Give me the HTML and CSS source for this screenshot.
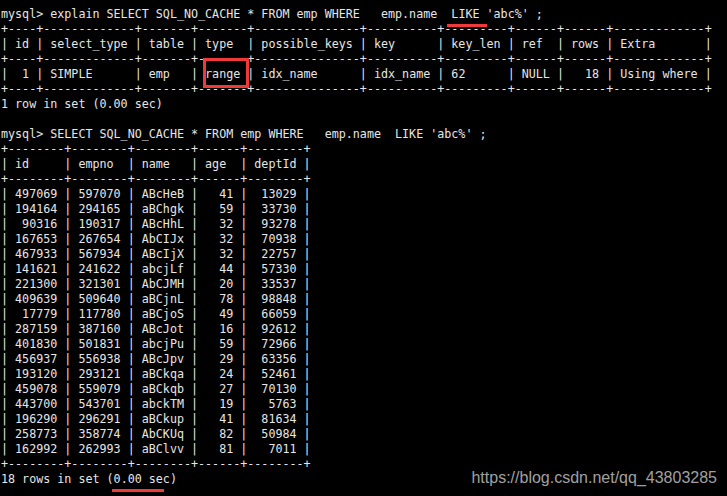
FILE: index.html
```html
<!DOCTYPE html>
<html lang="en">
<head>
    <meta charset="UTF-8">
    <meta name="viewport" content="width=device-width, initial-scale=1.0">
    <title>mysql explain</title>
    <link rel="stylesheet" href="styles.css">
</head>
<body>
    <div class="terminal">
<pre class="console">mysql&gt; explain SELECT SQL_NO_CACHE * FROM emp WHERE   emp.name  <span class="mark-line like">LIKE</span> 'abc%' ;
+----+-------------+-------+-------+---------------+----------+---------+------+------+-------------+
| id | select_type | table | type  | possible_keys | key      | key_len | ref  | rows | Extra       |
+----+-------------+-------+-------+---------------+----------+---------+------+------+-------------+
|  1 | SIMPLE      | emp   | <span class="mark-box">range</span> | idx_name      | idx_name | 62      | NULL |   18 | Using where |
+----+-------------+-------+-------+---------------+----------+---------+------+------+-------------+
1 row in set (0.00 sec)

mysql&gt; SELECT SQL_NO_CACHE * FROM emp WHERE   emp.name  LIKE 'abc%' ;
+--------+--------+--------+------+--------+
| id     | empno  | name   | age  | deptId |
+--------+--------+--------+------+--------+
| 497069 | 597070 | ABcHeB |   41 |  13029 |
| 194164 | 294165 | aBChgk |   59 |  33730 |
|  90316 | 190317 | ABcHhL |   32 |  93278 |
| 167653 | 267654 | AbCIJx |   32 |  70938 |
| 467933 | 567934 | ABcIjX |   32 |  22757 |
| 141621 | 241622 | abcjLf |   44 |  57330 |
| 221300 | 321301 | AbCJMH |   20 |  33537 |
| 409639 | 509640 | aBCjnL |   78 |  98848 |
|  17779 | 117780 | aBCjoS |   49 |  66059 |
| 287159 | 387160 | ABcJot |   16 |  92612 |
| 401830 | 501831 | abcjPu |   59 |  72966 |
| 456937 | 556938 | ABcJpv |   29 |  63356 |
| 193120 | 293121 | aBCkqa |   24 |  52461 |
| 459078 | 559079 | aBCkqb |   27 |  70130 |
| 443700 | 543701 | abckTM |   19 |   5763 |
| 196290 | 296291 | aBCkup |   41 |  81634 |
| 258773 | 358774 | AbCKUq |   82 |  50984 |
| 162992 | 262993 | aBClvv |   81 |   7011 |
+--------+--------+--------+------+--------+
18 rows in set (<span class="mark-line sec">0.00 sec</span>)</pre>
        <div class="watermark">https://blog.csdn.net/qq_43803285</div>
    </div>
</body>
</html>
```

FILE: styles.css
```css
html,
body {
    margin: 0;
    background-color: #000;
}

body {
    overflow: hidden;
}

.terminal {
    position: relative;
    height: 496px;
    background-color: #000;
}

.console {
    margin: 0;
    padding: 7px 0 0 1px;
    font-family: "DejaVu Sans Mono", "Liberation Mono", monospace;
    font-size: 11.7px;
    line-height: 15px;
    color: #e6e6e6;
}

/* red annotations drawn over the terminal text */
.mark-line,
.mark-box {
    position: relative;
}

.mark-line::after {
    content: "";
    position: absolute;
    height: 3px;
    bottom: -6px;
    background-color: #ef3a3a;
}

.like::after {
    left: -4px;
    right: -7px;
}

.sec::after {
    left: -2px;
    right: 6px;
}

.mark-box::after {
    content: "";
    position: absolute;
    left: -2px;
    right: -9px;
    top: -9px;
    bottom: -7px;
    border: 3px solid #ef3a3a;
}

.watermark {
    position: absolute;
    right: 10px;
    bottom: 10px;
    font-family: "Liberation Sans", Arial, sans-serif;
    font-size: 16px;
    line-height: 16px;
    color: #a0a0a0;
}
```
